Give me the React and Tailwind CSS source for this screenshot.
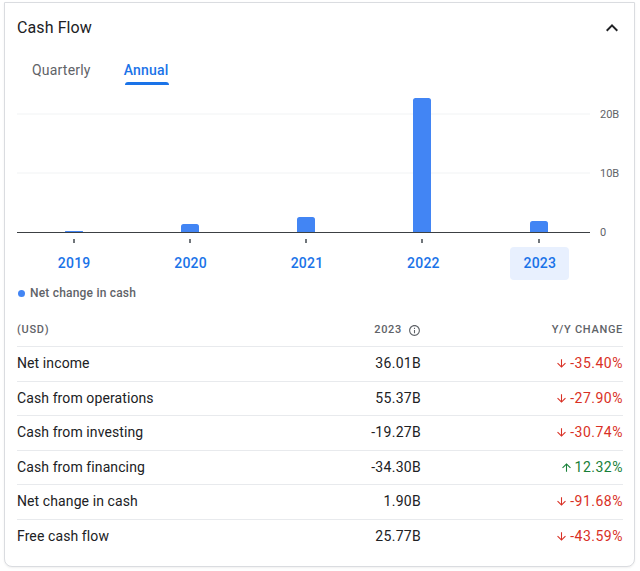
import React from "react";

const bars = [
  { x: 57, h: 1 },
  { x: 173, h: 8 },
  { x: 289, h: 15 },
  { x: 405, h: 134 },
  { x: 522, h: 11 },
];

const years = ["2019", "2020", "2021", "2022", "2023"];

const rows = [
  ["Net income", "36.01B", "-35.40%", false],
  ["Cash from operations", "55.37B", "-27.90%", false],
  ["Cash from investing", "-19.27B", "-30.74%", false],
  ["Cash from financing", "-34.30B", "12.32%", true],
  ["Net change in cash", "1.90B", "-91.68%", false],
  ["Free cash flow", "25.77B", "-43.59%", false],
];

function Arrow({ up }) {
  return (
    <svg width="13" height="13" viewBox="0 0 24 24" className={up ? "rotate-180" : ""} fill="currentColor">
      <path d="M20 12l-1.41-1.41L13 16.17V4h-2v12.17l-5.58-5.59L4 12l8 8 8-8z" />
    </svg>
  );
}

function barPath(cx, h) {
  const w = 18;
  const x0 = cx - w / 2;
  const y1 = 142;
  const y0 = y1 - h;
  const r = Math.min(2.5, h / 2);
  return `M${x0} ${y1} L${x0} ${y0 + r} Q${x0} ${y0} ${x0 + r} ${y0} L${x0 + w - r} ${y0} Q${x0 + w} ${y0} ${x0 + w} ${y0 + r} L${x0 + w} ${y1} Z`;
}

export default function App() {
  return (
    <div className="w-[640px] h-[571px] bg-white pt-[2px] pl-[4px]" style={{ fontFamily: "Roboto, 'Liberation Sans', sans-serif" }}>
      <div className="w-[631px] h-[565px] border border-[#dadce0] rounded-b-[8px] bg-white pl-[12px] pr-[11px] shadow-[0_1px_2px_rgba(60,64,67,0.08)]">
        {/* Header */}
        <div className="h-[50px] flex items-center justify-between">
          <div className="text-[16px] text-[#202124] tracking-[0.1px]">Cash Flow</div>
          <svg width="24" height="24" viewBox="0 0 24 24" fill="#202124" className="mr-[-1px]">
            <path d="M12 8l-6 6 1.41 1.41L12 10.83l4.59 4.58L18 14z" />
          </svg>
        </div>
        {/* Tabs */}
        <div className="h-[36px] flex items-start pl-[15px] gap-[33px] text-[14px] tracking-[0.2px]">
          <div className="text-[#5f6368] pt-[7px] leading-[20px]">Quarterly</div>
          <div className="text-[#1a73e8] font-medium pt-[7px] leading-[20px] relative">
            Annual
            <div className="absolute left-[1px] right-[0px] top-[29px] h-[3px] rounded-t-[3px] bg-[#1a73e8]" />
          </div>
        </div>
        {/* Chart */}
        <svg width="606" height="157" viewBox="0 0 606 157" className="block mt-[1px]">
          <line x1="0" x2="573" y1="24" y2="24" stroke="#f1f3f4" strokeWidth="1" />
          <line x1="0" x2="573" y1="83" y2="83" stroke="#f1f3f4" strokeWidth="1" />
          <text x="583" y="28" fontSize="11" fill="#5f6368" fontFamily="Roboto, sans-serif">20B</text>
          <text x="583" y="87" fontSize="11" fill="#5f6368" fontFamily="Roboto, sans-serif">10B</text>
          <text x="583" y="146" fontSize="11" fill="#5f6368" fontFamily="Roboto, sans-serif">0</text>
          {bars.map((b, i) => (
            <path key={i} d={barPath(b.x, b.h)} fill="#4285f4" />
          ))}
          <line x1="0" x2="573" y1="142.5" y2="142.5" stroke="#3c4043" strokeWidth="1" />
          {bars.map((b, i) => (
            <rect key={i} x={b.x - 1} y="149" width="2" height="4" fill="#70757a" />
          ))}
        </svg>
        {/* Years */}
        <div className="grid grid-cols-5 w-[582px] ml-[-1px] mt-[0px] h-[33px]">
          {years.map((y, i) => (
            <div key={y} className="flex justify-center">
              <div className={`h-[33px] w-[59px] flex items-center justify-center rounded-[4px] text-[14px] font-medium tracking-[0.2px] text-[#1a73e8] ${i === 4 ? "bg-[#e8f0fe]" : ""}`}>
                {y}
              </div>
            </div>
          ))}
        </div>
        {/* Legend */}
        <div className="flex items-center h-[26px] pl-[1px] gap-[5px]">
          <div className="w-[7px] h-[7px] rounded-full bg-[#4285f4]" />
          <div className="text-[12px] font-medium text-[#5f6368] tracking-[0.2px]">Net change in cash</div>
        </div>
        {/* Table */}
        <div className="mt-[6px]">
          <div className="grid grid-cols-[1fr_160px_202px] h-[35px] pt-[2px] items-center border-b border-[#e8eaed] text-[11px] font-medium text-[#5f6368] tracking-[0.7px]">
            <div>(USD)</div>
            <div className="flex items-center justify-end gap-[6px]">
              <span>2023</span>
              <svg width="13" height="13" viewBox="0 0 24 24" fill="#5f6368">
                <path d="M11 7h2v2h-2zm0 4h2v6h-2zm1-9C6.48 2 2 6.48 2 12s4.48 10 10 10 10-4.48 10-10S17.52 2 12 2zm0 18c-4.41 0-8-3.59-8-8s3.59-8 8-8 8 3.59 8 8-3.59 8-8 8z" />
              </svg>
            </div>
            <div className="text-right">Y/Y CHANGE</div>
          </div>
          {rows.map(([label, val, chg, up], i) => (
            <div
              key={label}
              className={`grid grid-cols-[1fr_160px_202px] h-[34.5px] items-center text-[14px] text-[#202124] tracking-[0.1px] ${i < rows.length - 1 ? "border-b border-[#e8eaed]" : ""}`}
            >
              <div>{label}</div>
              <div className="text-right tracking-[0.3px]">{val}</div>
              <div className={`flex items-center justify-end gap-[2px] tracking-[0.5px] ${up ? "text-[#188038]" : "text-[#d93025]"}`}>
                <Arrow up={up} />
                <span>{chg}</span>
              </div>
            </div>
          ))}
        </div>
      </div>
    </div>
  );
}
